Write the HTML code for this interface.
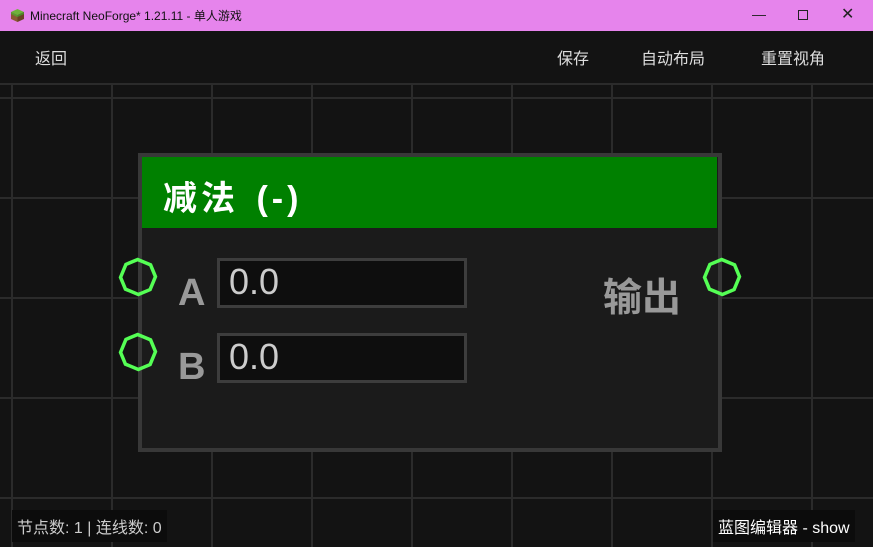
<!DOCTYPE html><html><head><meta charset="utf-8"><style>
body{margin:0;width:873px;height:547px;overflow:hidden;background:#131313;font-family:"Liberation Sans","Noto Sans CJK SC",sans-serif;position:relative}
.t{position:absolute;white-space:nowrap}
</style></head><body>
<div style="position:absolute;left:0;top:0;width:873px;height:31px;background:#e684ec"></div>
<svg class="t" style="left:10px;top:8px" width="15" height="15" viewBox="0 0 15 15"><polygon points="7.5,1 14,4 7.5,7 1,4" fill="#6fb33c"/><polygon points="1,4 7.5,7 7.5,14 1,11" fill="#8a5a34"/><polygon points="14,4 7.5,7 7.5,14 14,11" fill="#6b4326"/><polygon points="1,4 7.5,7 7.5,9 1,6" fill="#5a9a30"/><polygon points="14,4 7.5,7 7.5,9 14,6" fill="#4d8a2a"/></svg>
<div class="t" style="left:30px;top:7px;font-size:12px;color:#111">Minecraft NeoForge* 1.21.11 - 单人游戏</div>
<div class="t" style="left:752px;top:6px;font-size:14px;color:#222">—</div>
<div style="position:absolute;left:798px;top:10px;width:8px;height:8px;border:1px solid #222"></div>
<div class="t" style="left:841px;top:4px;font-size:16px;color:#222">✕</div>
<svg style="position:absolute;left:0;top:31px" width="873" height="516">
<g stroke="#2b2b2b" stroke-width="2">
<line x1="0" y1="53" x2="873" y2="53"/><line x1="0" y1="67" x2="873" y2="67"/><line x1="0" y1="167" x2="873" y2="167"/><line x1="0" y1="267" x2="873" y2="267"/><line x1="0" y1="367" x2="873" y2="367"/><line x1="0" y1="467" x2="873" y2="467"/>
<line x1="12" y1="53" x2="12" y2="516"/><line x1="112" y1="53" x2="112" y2="516"/><line x1="212" y1="53" x2="212" y2="516"/><line x1="312" y1="53" x2="312" y2="516"/><line x1="412" y1="53" x2="412" y2="516"/><line x1="512" y1="53" x2="512" y2="516"/><line x1="612" y1="53" x2="612" y2="516"/><line x1="712" y1="53" x2="712" y2="516"/><line x1="812" y1="53" x2="812" y2="516"/>
</g></svg>
<div style="position:absolute;left:0;top:31px;width:873px;height:52px;background:#131313;border-bottom:2px solid #2b2b2b"></div>
<div class="t" style="left:35px;top:45px;font-size:16px;color:#ddd">返回</div>
<div class="t" style="left:557px;top:45px;font-size:16px;color:#ddd">保存</div>
<div class="t" style="left:641px;top:45px;font-size:16px;color:#ddd">自动布局</div>
<div class="t" style="left:761px;top:45px;font-size:16px;color:#ddd">重置视角</div>
<div style="position:absolute;left:138px;top:153px;width:576px;height:291px;border:4px solid #383838;background:#1b1b1b"></div>
<div style="position:absolute;left:142px;top:157px;width:575px;height:71px;background:#008000"></div>
<div class="t" style="left:163px;top:171px;font-size:34px;font-weight:bold;color:#fff;letter-spacing:4px;word-spacing:4px">减法 (-)</div>
<div style="position:absolute;left:217px;top:258px;width:244px;height:44px;border:3px solid #3d3d3d;background:#0e0e0e"></div>
<div style="position:absolute;left:217px;top:333px;width:244px;height:44px;border:3px solid #3d3d3d;background:#0e0e0e"></div>
<div class="t" style="left:229px;top:261px;font-size:36px;color:#ccc">0.0</div>
<div class="t" style="left:229px;top:336px;font-size:36px;color:#ccc">0.0</div>
<div class="t" style="left:178px;top:272px;font-size:38px;font-weight:bold;color:#999">A</div>
<div class="t" style="left:178px;top:346px;font-size:38px;font-weight:bold;color:#999">B</div>
<div class="t" style="left:603px;top:267px;font-size:39px;font-weight:bold;color:#999">输出</div>
<svg style="position:absolute;left:0;top:0" width="873" height="547" fill="none" stroke="#55ff55" stroke-width="3.5">
<polygon points="131,261 145,261 154,270 154,284 145,293 131,293 122,284 122,270" transform="rotate(22.5 138 277)"/>
<polygon points="131,336 145,336 154,345 154,359 145,368 131,368 122,359 122,345" transform="rotate(22.5 138 352)"/>
<polygon points="715,261 729,261 738,270 738,284 729,293 715,293 706,284 706,270" transform="rotate(22.5 722 277)"/>
</svg>
<div class="t" style="left:12px;top:510px;padding:4px 5px;background:#0c0c0c;font-size:16px;color:#ccc">节点数: 1 | 连线数: 0</div>
<div class="t" style="left:713px;top:510px;padding:4px 5px;background:#0c0c0c;font-size:16px;color:#fff">蓝图编辑器 - show</div>
</body></html>
